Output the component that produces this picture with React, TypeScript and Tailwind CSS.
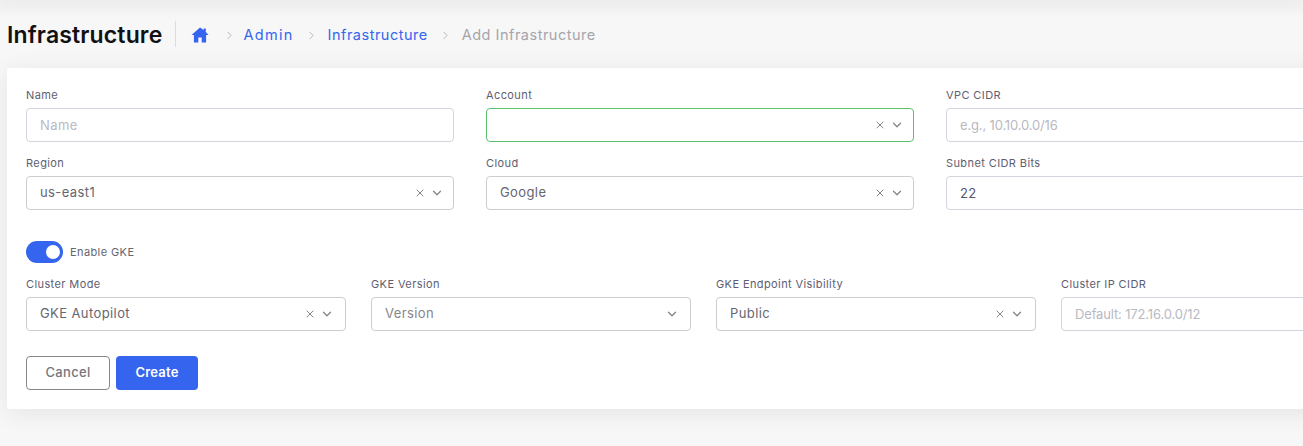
import { ChevronDown, ChevronRight, X } from "lucide-react";

const Crumb = ({ label, muted, wide }: { label: string; muted?: boolean; wide?: boolean }) => (
  <>
    <ChevronRight size={13} strokeWidth={1.5} className="ml-[1px] text-[#a9a9ae]" />
    <span className={`${muted ? "text-[#a5a5aa]" : "text-[#3565ee]"} ${wide ? "-ml-[3px] tracking-[1.3px]" : ""}`}>{label}</span>
  </>
);

const Field = ({ label, children }: { label: string; children: React.ReactNode }) => (
  <div className="flex flex-col">
    <label className="text-[11px] leading-[14px] tracking-[0.4px] text-[#5e5e70] mb-[6px]">{label}</label>
    {children}
  </div>
);

const TextInput = ({ placeholder, value, numeric }: { placeholder: string; value?: string; numeric?: boolean }) => (
  <input
    readOnly
    value={value}
    placeholder={placeholder}
    className={`h-[34px] w-full rounded-[4px] border border-[#d4d4de] bg-white px-[13px] text-[13px] text-[#55556a] outline-none placeholder:text-[#b9b9c2] ${
      numeric ? "tracking-[-0.15px]" : "tracking-[0.4px]"
    }`}
  />
);

const SelectBox = ({
  value,
  placeholder,
  active,
  clearable = true,
  wide,
}: {
  value?: string;
  placeholder?: string;
  active?: boolean;
  clearable?: boolean;
  wide?: boolean;
}) => (
  <div
    className={`flex h-[34px] items-center rounded-[4px] border bg-white pl-[13px] text-[13px] tracking-[0.4px] ${
      active ? "border-[#5cc173]" : "border-[#cdcdd0]"
    } ${wide ? "pr-[11px]" : "pr-[9px]"}`}
  >
    <span className={`flex-1 ${value ? "text-[#66666f]" : "text-[#85858c]"}`}>{value || placeholder}</span>
    {clearable && <X size={12} strokeWidth={2} className="mr-[4px] text-[#85858c]" />}
    <ChevronDown size={14} strokeWidth={2.2} className="text-[#85858c]" />
  </div>
);

export default function App() {
  return (
    <div className="h-[446px] w-[1303px] overflow-hidden bg-[#f7f7f8] font-['Inter',sans-serif]">
      <div className="h-0 shadow-[0_0_16px_6px_rgba(0,0,0,0.07)]" />

      {/* title, breadcrumb */}
      <div className="flex h-[68px] items-center pl-[7px] pt-[2px]">
        <h1 className="text-[23px] font-semibold tracking-[0.15px] text-[#111114]">Infrastructure</h1>
        <div className="ml-[13px] h-[26px] w-px -translate-y-[1px] bg-[#dcdcdf]" />
        <div className="ml-[15px] flex items-center gap-[10px] text-[14.5px] tracking-[0.5px]">
          <svg width="18" height="16" viewBox="0 0 18 16" className="mr-[3px] fill-[#3565ee]">
            <path d="M9 0.5 0.5 8h2.4v7.5h4.4v-5h3.4v5h4.4V8h2.4L14.8 5V1.5h-2.2v1.6Z" />
          </svg>
          <Crumb label="Admin" wide />
          <Crumb label="Infrastructure" />
          <Crumb label="Add Infrastructure" muted />
        </div>
      </div>

      {/* form card */}
      <div className="h-[341px] w-[1400px] ml-[7px] rounded-[3px] bg-white px-[19px] pt-[20px] shadow-[0_4px_24px_rgba(0,0,0,0.08)]">
        <div className="grid grid-cols-[428px_428px_428px] gap-x-[32px] gap-y-[14px]">
          <Field label="Name">
            <TextInput placeholder="Name" />
          </Field>
          <Field label="Account">
            <SelectBox active />
          </Field>
          <Field label="VPC CIDR">
            <TextInput placeholder="e.g., 10.10.0.0/16" numeric />
          </Field>
          <Field label="Region">
            <SelectBox value="us-east1" />
          </Field>
          <Field label="Cloud">
            <SelectBox value="Google" />
          </Field>
          <Field label="Subnet CIDR Bits">
            <TextInput placeholder="" value="22" />
          </Field>
        </div>

        <div className="mt-[31px] flex items-center gap-[7px]">
          <div className="flex h-[22px] w-[37px] items-center justify-end rounded-full bg-[#3565ee] pr-[3px]">
            <div className="h-[14px] w-[14px] rounded-full bg-white" />
          </div>
          <span className="text-[11px] tracking-[0.4px] text-[#66666f]">Enable GKE</span>
        </div>

        <div className="mt-[14px] grid grid-cols-[320px_320px_320px_320px] gap-x-[25px]">
          <Field label="Cluster Mode">
            <SelectBox value="GKE Autopilot" wide />
          </Field>
          <Field label="GKE Version">
            <SelectBox placeholder="Version" clearable={false} wide />
          </Field>
          <Field label="GKE Endpoint Visibility">
            <SelectBox value="Public" wide />
          </Field>
          <Field label="Cluster IP CIDR">
            <TextInput placeholder="Default: 172.16.0.0/12" numeric />
          </Field>
        </div>

        <div className="mt-[25px] flex gap-[6px]">
          <button className="h-[34px] w-[84px] rounded-[4px] border border-[#85858c] bg-white text-[13px] font-medium tracking-[0.3px] text-[#76767e]">
            Cancel
          </button>
          <button className="h-[34px] w-[82px] rounded-[4px] bg-[#3565ee] text-[13px] font-semibold tracking-[0.2px] text-white">
            Create
          </button>
        </div>
      </div>
    </div>
  );
}
